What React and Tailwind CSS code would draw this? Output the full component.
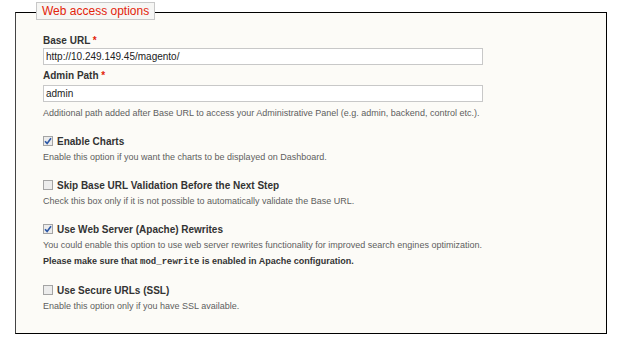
import React from 'react';

const Check = ({ checked }) => (
  <span className="w-[10px] h-[10px] border border-[#a4a4a4] bg-[#ececec] flex items-center justify-center shrink-0">
    {checked && (
      <svg width="8" height="8" viewBox="0 0 8 8">
        <path d="M1 4.2 L3.1 6.4 L7 1.2" fill="none" stroke="#2d58a6" strokeWidth="1.6" />
      </svg>
    )}
  </span>
);

const Option = ({ checked, label, children }) => (
  <div className="mt-[12px]">
    <div className="flex items-center gap-[4px] h-[16px]">
      <Check checked={checked} />
      <span className="text-[10px] font-bold text-[#333]">{label}</span>
    </div>
    {children}
  </div>
);

const Desc = ({ children, className = '' }) => (
  <p className={`text-[9px] leading-[16px] text-[#5e5e5e] ${className}`}>{children}</p>
);

const App = () => {
  return (
    <div className="w-[622px] h-[337px] bg-white pt-[12px] pl-[15px] font-['Liberation_Sans',Arial,sans-serif]">
      <div className="relative w-[592px] h-[322px] border border-black border-l-[#444] bg-[#fcfbf7] pt-[20px] pl-[27px]">
        {/* legend */}
        <div className="absolute left-[20px] top-[-11px] h-[18px] px-[5px] flex items-center bg-[#f6f6f4] border border-[#c8c8c8] text-[12px] text-[#e3240b]">
          Web access options
        </div>

        <div className="text-[10px] leading-[15px] font-bold text-[#333]">
          Base URL <span className="text-[#e3240b]">*</span>
        </div>
        <div className="w-[440px] h-[17px] border border-[#c8c8c8] bg-white px-[2px] text-[10px] leading-[15px] text-[#222]">
          http://10.249.149.45/magento/
        </div>

        <div className="mt-[3px] text-[10px] leading-[16px] font-bold text-[#333]">
          Admin Path <span className="text-[#e3240b]">*</span>
        </div>
        <div className="mt-[1px] w-[440px] h-[17px] border border-[#c8c8c8] bg-white px-[2px] text-[10px] leading-[15px] text-[#222]">
          admin
        </div>
        <Desc className="mt-[3px]">
          Additional path added after Base URL to access your Administrative Panel (e.g. admin, backend, control etc.).
        </Desc>

        <Option checked label="Enable Charts">
          <Desc>Enable this option if you want the charts to be displayed on Dashboard.</Desc>
        </Option>

        <Option label="Skip Base URL Validation Before the Next Step">
          <Desc>Check this box only if it is not possible to automatically validate the Base URL.</Desc>
        </Option>

        <Option checked label="Use Web Server (Apache) Rewrites">
          <Desc>You could enable this option to use web server rewrites functionality for improved search engines optimization.</Desc>
          <Desc className="font-bold text-[#333]">
            Please make sure that <code className="font-['Liberation_Mono',monospace] font-bold">mod_rewrite</code> is enabled in Apache configuration.
          </Desc>
        </Option>

        <Option label="Use Secure URLs (SSL)">
          <Desc>Enable this option only if you have SSL available.</Desc>
        </Option>
      </div>
    </div>
  );
};

export default App;
